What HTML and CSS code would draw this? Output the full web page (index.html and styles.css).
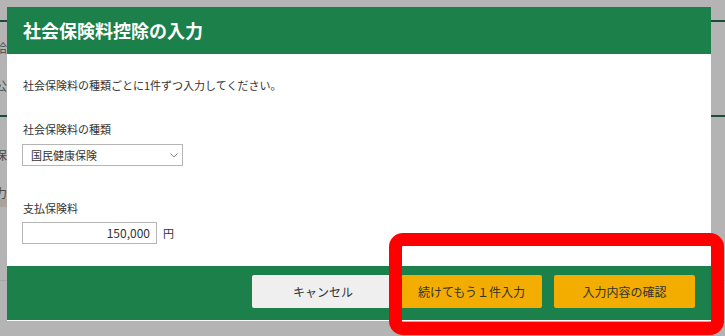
FILE: index.html
```html
<!DOCTYPE html>
<html lang="ja">
<head>
    <meta charset="UTF-8">
    <title>社会保険料控除の入力</title>
    <link rel="stylesheet" href="styles.css">
</head>
<body>
    <div class="page">
        <div class="page-rule"></div>
        <div class="page-text first">給</div>
        <div class="page-text second">公</div>
        <div class="page-rule mid"></div>
        <div class="page-text third">保</div>
        <div class="page-text fourth">力</div>
        <div class="page-band"></div>
        <div class="page-line"></div>
    </div>

    <div class="modal">
        <div class="modal-header">社会保険料控除の入力</div>
        <div class="modal-body">
            <p class="intro">社会保険料の種類ごとに1件ずつ入力してください。</p>
            <label class="field-label">社会保険料の種類</label>
            <div class="select">
                <span>国民健康保険</span>
                <svg width="8" height="5" viewBox="0 0 8 5"><path d="M0.5 0.5 L4 4 L7.5 0.5" fill="none" stroke="#888" stroke-width="1"/></svg>
            </div>
            <label class="field-label second">支払保険料</label>
            <div class="amount-row">
                <div class="amount-input">150,000</div>
                <span class="unit">円</span>
            </div>
        </div>
        <div class="modal-footer">
            <button class="btn btn-cancel">キャンセル</button>
            <button class="btn btn-primary">続けてもう１件入力</button>
            <button class="btn btn-primary">入力内容の確認</button>
        </div>
    </div>

    <div class="highlight"></div>
</body>
</html>
```

FILE: styles.css
```css
body {
    margin: 0;
    width: 725px;
    height: 336px;
    overflow: hidden;
    background-color: #b4b4b4;
    font-family: "Noto Sans CJK JP", "Noto Sans", sans-serif;
    color: #333;
}
.page {
    padding-top: 20px;
}
.page-rule {
    height: 2px;
    background-color: #1f4a33;
}
.page-rule.mid {
    margin-top: 21px;
}
.page-text {
    width: 7px;
    overflow: hidden;
    direction: rtl;
    font-size: 12px;
    line-height: 16px;
    color: #4a4a4a;
}
.page-text.first { margin-top: 18px; }
.page-text.second { margin-top: 22px; }
.page-text.third { margin-top: 30px; }
.page-text.fourth { margin-top: 22px; }
.page-band {
    width: 7px;
    height: 8px;
    margin-top: -2px;
    background-color: #aaa59c;
}
.page-line {
    height: 1px;
    margin-top: 73px;
    background-color: #a6a6a6;
}
.modal {
    position: absolute;
    left: 7px;
    top: 7px;
    width: 704px;
    height: 314px;
    background-color: #fff;
    display: flex;
    flex-direction: column;
}
.modal-header {
    height: 47px;
    line-height: 47px;
    padding-left: 16px;
    background-color: #1b804a;
    color: #fff;
    font-size: 18px;
    font-weight: bold;
}
.modal-body {
    flex: 1;
    padding: 23px 15px 0 16px;
    font-size: 11px;
    line-height: 16px;
}
.intro {
    margin: 0;
}
.field-label {
    display: block;
    margin-top: 28px;
}
.field-label.second {
    margin-top: 34px;
}
.select {
    width: 161px;
    height: 22px;
    margin: 7px 0 0 -1px;
    border: 1px solid #b5b5b5;
    box-sizing: border-box;
    display: flex;
    align-items: center;
    justify-content: space-between;
    padding: 0 4px 0 8px;
}
.amount-row {
    display: flex;
    align-items: center;
    gap: 6px;
    margin: 6px 0 0 -1px;
}
.amount-input {
    width: 135px;
    height: 22px;
    line-height: 20px;
    border: 1px solid #b5b5b5;
    box-sizing: border-box;
    text-align: right;
    padding-right: 6px;
    font-size: 12px;
}
.modal-footer {
    height: 54px;
    margin-bottom: 1px;
    background-color: #1b804a;
    display: flex;
    justify-content: flex-end;
    align-items: flex-start;
    padding: 8px 16px 0 0;
    box-sizing: border-box;
    gap: 12px;
}
.btn {
    height: 33px;
    width: 141px;
    border: none;
    border-radius: 2px;
    font-family: "Noto Sans CJK JP", "Noto Sans", sans-serif;
    font-size: 12px;
    color: #333;
    cursor: pointer;
}
.btn-cancel {
    width: 142px;
    margin-right: -5px;
    background-color: #efefef;
    margin-top: 1px;
}
.btn-primary {
    margin-top: 1px;
    background-color: #f2ad00;
}
.highlight {
    position: absolute;
    left: 389px;
    top: 233px;
    width: 335px;
    height: 102px;
    box-sizing: border-box;
    border: 13px solid #ff0000;
    border-radius: 14px;
}
```
